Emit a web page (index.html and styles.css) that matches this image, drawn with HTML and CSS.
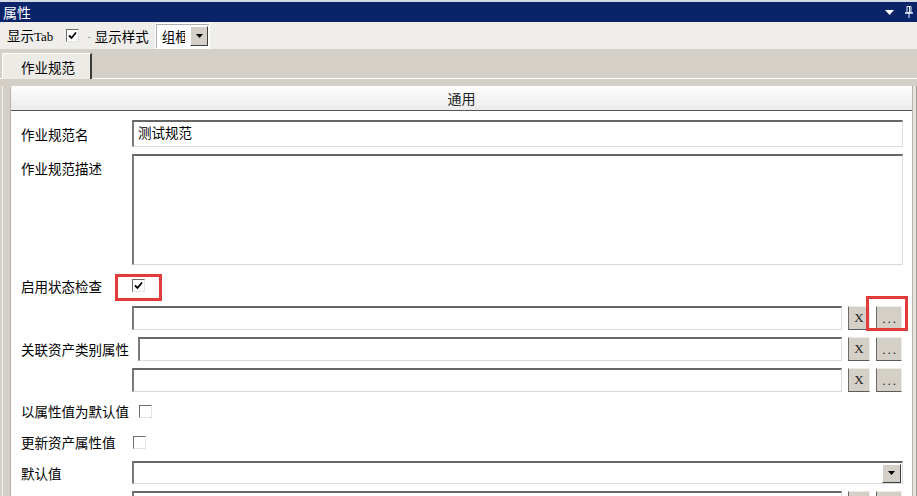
FILE: index.html
```html
<!DOCTYPE html>
<html lang="zh">
<head>
<meta charset="utf-8">
<title>属性</title>
<link rel="stylesheet" href="styles.css">
</head>
<body>
<div class="win">
  <div class="titlebar">
    <span class="title">属性</span>
    <span class="ticons">
      <svg width="9" height="5" viewBox="0 0 9 5"><path d="M0 0H9L4.5 5Z" fill="#fff"/></svg>
      <svg width="8" height="12" viewBox="0 0 8 12"><path d="M2 0.5H6V6.5H2Z" fill="none" stroke="#e8eeff"/><path d="M4.5 1V6" stroke="#e8eeff"/><path d="M0 7H8" stroke="#e8eeff" stroke-width="1.5"/><path d="M4 7V12" stroke="#e8eeff"/></svg>
    </span>
  </div>
  <div class="toolbar">
    <span class="tlabel">显示<span class="latin">Tab</span></span>
    <span class="cb tcb"><svg width="9" height="9" viewBox="0 0 9 9"><path d="M1 4.5L3.5 7L8 1.5" fill="none" stroke="#000" stroke-width="1.8"/></svg></span>
    <span class="sep">-</span>
    <span class="tlabel">显示样式</span>
    <span class="tcombo"><span class="tcombo-text">组框</span><span class="dd"><svg width="7" height="4" viewBox="0 0 7 4"><path d="M0 0H7L3.5 4Z" fill="#000"/></svg></span></span>
  </div>
  <div class="tabstrip"><div class="tab">作业规范</div></div>
  <div class="body">
    <div class="gutter"></div>
    <div class="panel">
      <div class="section-head">通用</div>
      <div class="form">
        <div class="row">
          <span class="lbl">作业规范名</span>
          <div class="field h27">测试规范</div>
        </div>
        <div class="row">
          <span class="lbl top">作业规范描述</span>
          <div class="field tall"></div>
        </div>
        <div class="row h27row">
          <span class="lbl">启用状态检查</span>
          <span class="cb"><svg width="9" height="9" viewBox="0 0 9 9"><path d="M1 4.5L3.5 7L8 1.5" fill="none" stroke="#000" stroke-width="1.8"/></svg><span class="hl hl-cb"></span></span>
        </div>
        <div class="row">
          <span class="lbl"></span>
          <div class="field h24"></div>
          <div class="btn">X</div>
          <div class="btn dots">...<span class="hl hl-btn"></span></div>
        </div>
        <div class="row">
          <span class="lbl wide">关联资产类别属性</span>
          <div class="field h24"></div>
          <div class="btn">X</div>
          <div class="btn dots">...</div>
        </div>
        <div class="row">
          <span class="lbl"></span>
          <div class="field h24"></div>
          <div class="btn">X</div>
          <div class="btn dots">...</div>
        </div>
        <div class="row h24row">
          <span class="lbl wide wide-cb">以属性值为默认值</span>
          <span class="cb"></span>
        </div>
        <div class="row h24row">
          <span class="lbl">更新资产属性值</span>
          <span class="cb cb-off"></span>
        </div>
        <div class="row">
          <span class="lbl">默认值</span>
          <div class="field combo h23"><span class="combo-btn"><svg width="7" height="4" viewBox="0 0 7 4"><path d="M0 0H7L3.5 4Z" fill="#000"/></svg></span></div>
        </div>
        <div class="row">
          <span class="lbl"></span>
          <div class="field h24"></div>
          <div class="btn"></div>
          <div class="btn dots"></div>
        </div>
      </div>
    </div>
    <div class="scroll"></div>
  </div>
</div>
</body>
</html>
```

FILE: styles.css
```css
html, body {
  margin: 0;
  padding: 0;
}
body {
  width: 917px;
  height: 496px;
  overflow: hidden;
  font-family: "Noto Sans CJK SC", sans-serif;
  font-size: 13.5px;
  color: #000;
  background: #d4d0c8;
}
.win {
  display: flex;
  flex-direction: column;
  height: 496px;
}
.titlebar {
  height: 20px;
  border-top: 2px solid #d4d9e3;
  background: #0b2469;
  color: #fff;
  display: flex;
  align-items: center;
  justify-content: space-between;
  padding: 0 4px 0 3px;
  font-size: 14px;
  line-height: 20px;
  flex: none;
}
.ticons {
  display: flex;
  align-items: center;
  gap: 11px;
}
.toolbar {
  height: 27px;
  background: #efeeea;
  display: flex;
  align-items: center;
  padding-left: 7px;
  flex: none;
}
.tlabel {
  line-height: 16px;
}
.latin {
  font-family: "Liberation Serif", serif;
  font-size: 13px;
}
.tcb {
  margin-left: 13px;
}
.sep {
  margin: 0 4px 0 8px;
  color: #888;
  font-size: 10px;
}
.tcombo {
  margin-left: 6px;
  width: 55px;
  height: 26px;
  box-sizing: border-box;
  display: flex;
  background: #fff;
  border: 1px solid #fff;
  box-shadow: inset 1px 1px #b0b0b0;
  padding: 2px 1px 2px 6px;
}
.tcombo-text {
  width: 24px;
  margin-right: 5px;
  overflow: hidden;
  white-space: nowrap;
  line-height: 20px;
}
.dd {
  width: 18px;
  box-sizing: border-box;
  background: #d4d0c8;
  border: 1px solid;
  border-color: #fff #404040 #404040 #fff;
  display: flex;
  align-items: center;
  justify-content: center;
}
.tabstrip {
  height: 29px;
  background: #d4d0c8;
  border-bottom: 1px solid #fff;
  display: flex;
  align-items: flex-end;
  padding-left: 2px;
  flex: none;
}
.tab {
  height: 26px;
  margin-bottom: -1px;
  box-sizing: border-box;
  width: 90px;
  padding-left: 18px;
  background: #ecebe6;
  border-top: 1px solid #fff;
  border-left: 1px solid #fff;
  border-right: 2px solid #3a3a3a;
  display: flex;
  align-items: center;
  line-height: 16px;
}
.body {
  flex: 1;
  display: flex;
  padding-top: 7px;
  min-height: 0;
  background: #d4d0c8;
}
.gutter {
  width: 10px;
  flex: none;
  background: linear-gradient(to right, #d4d0c8 2px, #f2f1ed 2px, #f2f1ed 3px, #d4d0c8 3px);
}
.panel {
  flex: 1;
  background: #fff;
  border-left: 1px solid #b4b2aa;
  border-right: 1px solid #b4b2aa;
  border-top-left-radius: 3px;
  display: flex;
  flex-direction: column;
  overflow: hidden;
}
.section-head {
  height: 24px;
  flex: none;
  border-bottom: 1px solid #555;
  background: linear-gradient(#fefefe, #ebebeb);
  text-align: center;
  line-height: 24px;
  font-size: 14px;
  color: #222;
}
.form {
  display: flex;
  flex-direction: column;
  gap: 7px;
  padding: 9px 9px 0 10px;
}
.row {
  display: flex;
  align-items: center;
}
.h27row { height: 27px; }
.h24row { height: 24px; }
.lbl {
  width: 111px;
  flex: none;
  line-height: 16px;
  white-space: nowrap;
}
.lbl.top {
  align-self: flex-start;
  margin-top: 6px;
}
.lbl.wide {
  width: auto;
  margin-right: 9px;
}
.lbl.wide-cb {
  margin-right: 10px;
}
.field {
  flex: 1;
  box-sizing: border-box;
  background: #fff;
  border-style: solid;
  border-width: 2px 1px 1px 2px;
  border-color: #666 #dadada #dadada #7a7a7a;
  padding-left: 4px;
  line-height: 20px;
}
.h27 { height: 27px; }
.h24 { height: 24px; }
.h23 { height: 23px; }
.tall { height: 111px; }
.combo {
  display: flex;
  justify-content: flex-end;
  align-items: center;
  padding-right: 1px;
}
.combo-btn {
  width: 19px;
  height: 19px;
  box-sizing: border-box;
  background: #d4d0c8;
  border: 1px solid;
  border-color: #fff #404040 #404040 #fff;
  display: flex;
  align-items: center;
  justify-content: center;
}
.btn {
  position: relative;
  flex: none;
  width: 22px;
  height: 24px;
  margin-left: 6px;
  box-sizing: border-box;
  background: #d4d0c8;
  border: 1px solid;
  border-color: #ecebe6 #ecebe6 #5a5a5a #6a6a6a;
  font-family: "Liberation Serif", serif;
  font-size: 13px;
  line-height: 22px;
  text-align: center;
  color: #222;
}
.btn.dots {
  width: 26px;
  margin-right: 1px;
  letter-spacing: 2px;
  padding-left: 2px;
  font-size: 13px;
  line-height: 24px;
}
.cb {
  position: relative;
  flex: none;
  width: 13px;
  height: 13px;
  box-sizing: border-box;
  border: 1px solid;
  border-color: #6e6e6e #e2e2e2 #e2e2e2 #6e6e6e;
  background: #fff;
  display: inline-flex;
  align-items: center;
  justify-content: center;
}
.cb-off {
  margin-left: 1px;
}
.hl {
  position: absolute;
  box-sizing: border-box;
  border: 3px solid #e23b3b;
}
.hl-cb {
  left: -18px;
  top: -6px;
  width: 47px;
  height: 27px;
}
.hl-btn {
  left: -11px;
  top: -11px;
  width: 42px;
  height: 35px;
}
.scroll {
  width: 3px;
  flex: none;
  background: #e6e4de;
  border-right: 1px solid #9a9890;
}
```
